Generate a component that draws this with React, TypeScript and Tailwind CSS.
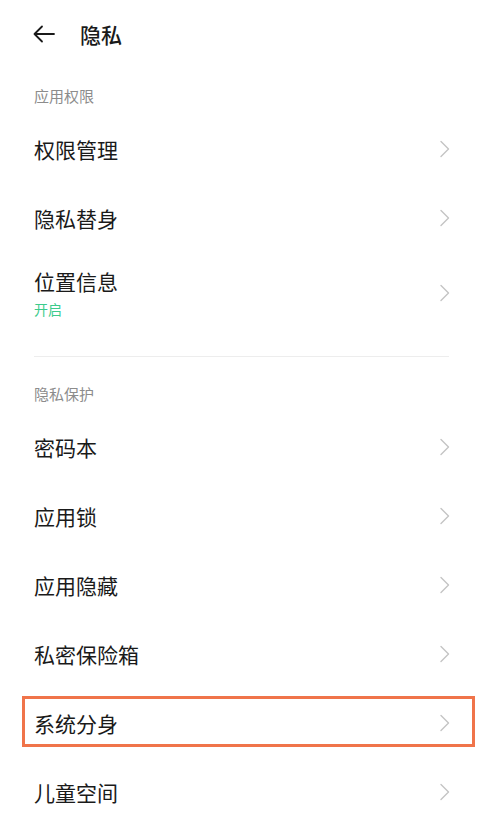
import React from "react";

const font = { fontFamily: '"Noto Sans CJK SC", "Noto Sans", sans-serif' };

function Chevron() {
  return (
    <svg width="12" height="18" viewBox="0 0 12 18" fill="none" className="shrink-0">
      <path d="M2 1.5 L9.5 9 L2 16.5" stroke="#c4c4c4" strokeWidth="1.4" strokeLinecap="round" strokeLinejoin="round" />
    </svg>
  );
}

function Row({ label, highlight }: { label: string; highlight?: boolean }) {
  return (
    <div className="relative h-[69px] flex items-center justify-between pl-[34px] pr-[32px]">
      <span className="text-[21px] leading-[28px] text-[#1a1a1a]">{label}</span>
      <Chevron />
      {highlight && (
        <div className="absolute left-[22px] right-[8px] top-[8px] bottom-[10px] border-[3.5px] border-[#f0744a]" />
      )}
    </div>
  );
}

function SectionLabel({ text, pt }: { text: string; pt: string }) {
  return (
    <div className={`${pt} pb-[8px] pl-[34px] text-[15px] leading-[20px] text-[#8c8c8c]`}>{text}</div>
  );
}

export default function App() {
  return (
    <div className="w-[483px] h-[815px] bg-white overflow-hidden" style={font}>
      <div className="h-[68px] flex items-center pl-[32px]">
        <svg width="24" height="20" viewBox="0 0 24 20" fill="none">
          <path d="M22 10 H2.5 M10 2.5 L2.5 10 L10 17.5" stroke="#1a1a1a" strokeWidth="1.8" strokeLinecap="round" strokeLinejoin="round" />
        </svg>
        <span className="ml-[24px] text-[21px] leading-[28px] font-medium text-[#1a1a1a]">隐私</span>
      </div>
      <SectionLabel text="应用权限" pt="pt-[18px]" />
      <Row label="权限管理" />
      <Row label="隐私替身" />
      <div className="h-[82px] flex items-center justify-between pl-[34px] pr-[32px]">
        <div className="flex flex-col">
          <span className="text-[21px] leading-[28px] text-[#1a1a1a]">位置信息</span>
          <span className="mt-[4px] text-[14px] leading-[20px] text-[#3ccb8c]">开启</span>
        </div>
        <Chevron />
      </div>
      <div className="mt-[22px] mx-[34px] h-px bg-[#ededed]" />
      <SectionLabel text="隐私保护" pt="pt-[27px]" />
      <Row label="密码本" />
      <Row label="应用锁" />
      <Row label="应用隐藏" />
      <Row label="私密保险箱" />
      <Row label="系统分身" highlight />
      <Row label="儿童空间" />
    </div>
  );
}
